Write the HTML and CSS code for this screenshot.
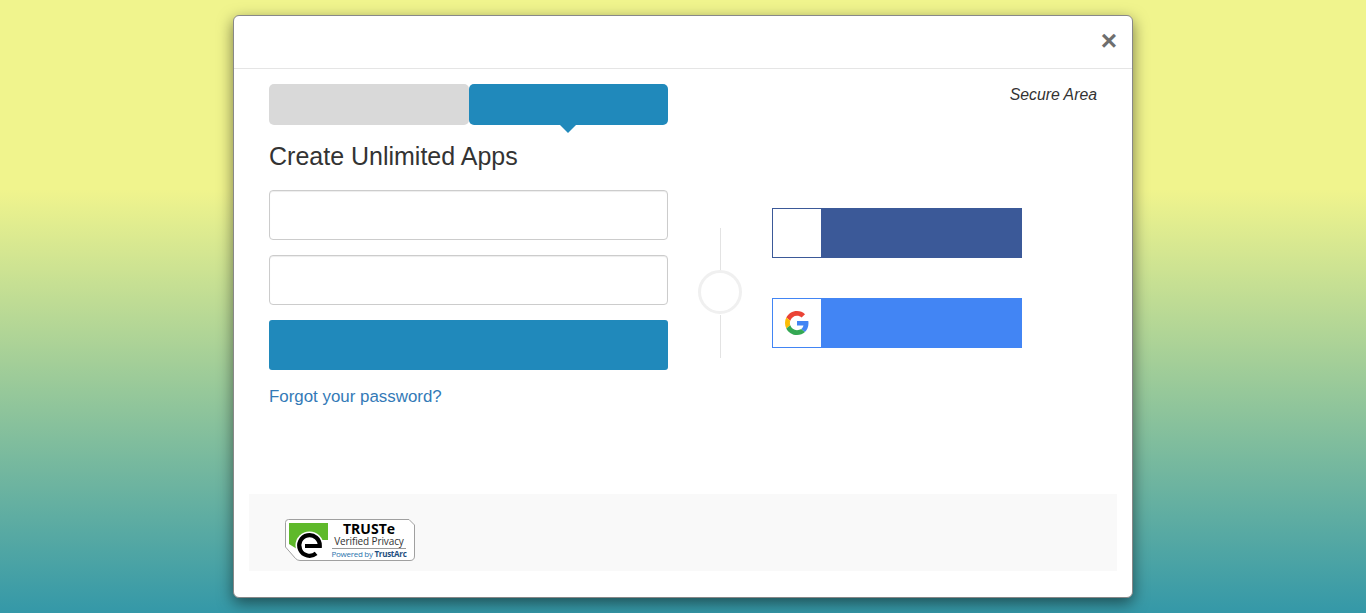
FILE: index.html
```html
<!DOCTYPE html>
<html lang="en">
<head>
<meta charset="utf-8">
<title>Create Unlimited Apps</title>
<link rel="stylesheet" href="styles.css">
</head>
<body>
<div class="modal">
  <header class="modal-header">
    <button class="close" type="button" aria-label="Close">×</button>
  </header>
  <div class="modal-body">
    <section class="col-form">
      <div class="tabs">
        <div class="tab tab-off"></div>
        <div class="tab tab-on"></div>
      </div>
      <h1 class="title">Create Unlimited Apps</h1>
      <input class="field" type="text" aria-label="Email">
      <input class="field" type="password" aria-label="Password">
      <button class="submit" type="button"></button>
      <a class="forgot" href="#">Forgot your password?</a>
    </section>
    <div class="col-divider">
      <span class="line"></span>
      <span class="ring"></span>
      <span class="line"></span>
    </div>
    <section class="col-social">
      <div class="social social-fb"><span class="social-icon"></span></div>
      <div class="social social-g">
        <span class="social-icon">
          <svg class="g-logo" viewBox="0 0 48 48" width="24" height="24">
            <path fill="#EA4335" d="M24 9.5c3.54 0 6.71 1.22 9.21 3.6l6.85-6.85C35.9 2.38 30.47 0 24 0 14.62 0 6.51 5.38 2.56 13.22l7.98 6.19C12.43 13.72 17.74 9.5 24 9.5z"/>
            <path fill="#4285F4" d="M46.98 24.55c0-1.57-.15-3.09-.38-4.55H24v9.02h12.94c-.58 2.96-2.26 5.48-4.78 7.18l7.73 6c4.51-4.18 7.09-10.36 7.09-17.65z"/>
            <path fill="#FBBC05" d="M10.53 28.59c-.48-1.45-.76-2.99-.76-4.59s.27-3.14.76-4.59l-7.98-6.19C.92 16.46 0 20.12 0 24c0 3.88.92 7.54 2.56 10.78l7.97-6.19z"/>
            <path fill="#34A853" d="M24 48c6.48 0 11.93-2.13 15.89-5.81l-7.73-6c-2.15 1.45-4.92 2.3-8.16 2.3-6.26 0-11.57-4.22-13.47-9.91l-7.98 6.19C6.51 42.62 14.62 48 24 48z"/>
          </svg>
        </span>
      </div>
    </section>
    <em class="secure">Secure Area</em>
  </div>
  <footer class="modal-footer">
    <div class="badge">
      <svg class="badge-mark" viewBox="0 0 130 42" width="130" height="42">
        <path fill="#fff" stroke="#a0a0a0" d="M3.500 .5H124L129.500 6V37Q129.500 41.500 125 41.500H15Q12.500 41.500 10.500 39.500L.5 28V3.500Q.5 .5 3.500 .5z"/>
        <path fill="#5fb92b" d="M4 4H43V21H30L12 30L4 25z"/>
        <circle cx="24.500" cy="26.500" r="14" fill="#fff"/>
        <path fill="none" stroke="#000" stroke-width="4.200" d="M31.100 34.400A10.300 10.300 0 1 1 34.800 27H20"/>
      </svg>
      <div class="badge-text">
        <strong class="badge-name">TRUSTe</strong>
        <span class="badge-sub">Verified Privacy</span>
        <span class="badge-by">Powered by <b class="badge-arc">TrustArc</b></span>
      </div>
    </div>
  </footer>
</div>
</body>
</html>
```
FILE: styles.css
```css
* { box-sizing: border-box; }
html, body { height: 100%; }
body {
  margin: 0;
  overflow: hidden;
  font-family: "Liberation Sans", Arial, sans-serif;
  color: #333;
  background: linear-gradient(180deg, #f0f48d 0, #f0f48d 190px, #3498a8 613px);
}
.modal {
  width: 900px;
  height: 583px;
  margin: 15px auto 0;
  background: #fff;
  border: 1px solid #888;
  border-radius: 6px;
  box-shadow: 0 5px 15px rgba(0, 0, 0, .5);
  display: flex;
  flex-direction: column;
}
.modal-header {
  height: 53px;
  flex: none;
  border-bottom: 1px solid #e5e5e5;
  display: flex;
  justify-content: flex-end;
  padding: 11px 14px 0 0;
}
.close {
  width: 18px;
  height: 28px;
  padding: 0;
  border: 0;
  background: none;
  color: #6e6e6e;
  font: bold 28px/28px "Liberation Sans", Arial, sans-serif;
}
.modal-body {
  position: relative;
  height: 425px;
  flex: none;
  padding: 15px 35px 0;
  display: flex;
}
.col-form { width: 399px; flex: none; display: flex; flex-direction: column; align-items: flex-start; }
.tabs { width: 100%; display: flex; height: 41px; flex: none; }
.tab { flex: 1; border-radius: 5px; position: relative; }
.tab-off { background: #d9d9d9; }
.tab-on { background: #2089bb; }
.tab-on::after {
  content: "";
  position: absolute;
  left: 50%;
  top: 100%;
  margin-left: -8px;
  border: 8px solid transparent;
  border-bottom-width: 0;
  border-top-color: #2089bb;
}
.title {
  margin: 18px 0 20px;
  font-size: 25px;
  line-height: 27px;
  font-weight: 400;
  color: #333;
}
.field {
  display: block;
  width: 100%;
  height: 50px;
  flex: none;
  margin: 0 0 15px;
  padding: 6px 12px;
  border: 1px solid #ccc;
  border-radius: 4px;
  background: #fff;
  box-shadow: inset 0 1px 1px rgba(0, 0, 0, .075);
}
.submit {
  display: block;
  width: 100%;
  height: 50px;
  flex: none;
  padding: 0;
  border: 0;
  border-radius: 3px;
  background: #2089bb;
}
.forgot {
  margin-top: 18px;
  font-size: 16.900px;
  line-height: 18px;
  color: #337ab7;
  text-decoration: none;
}
.col-divider {
  width: 104px;
  flex: none;
  height: 130px;
  margin-top: 144px;
  display: flex;
  flex-direction: column;
  align-items: center;
}
.line { flex: 1; width: 1px; background: #e3e3e3; }
.ring { width: 44px; height: 44px; flex: none; margin: -1px 0 1px; border: 3px solid #f0f0f0; border-radius: 50%; background: #fff; }
.col-social { padding-top: 124px; display: flex; flex-direction: column; gap: 40px; }
.social { width: 250px; height: 50px; display: flex; }
.social-icon {
  width: 50px;
  height: 50px;
  background: #fff;
  display: flex;
  align-items: center;
  justify-content: center;
}
.social-fb { background: #3b5998; }
.social-fb .social-icon { border: 1px solid #3b5998; }
.social-g { background: #4285f4; }
.social-g .social-icon { border: 1px solid #4285f4; }
.secure {
  position: absolute;
  top: 17px;
  right: 35px;
  font-size: 15.800px;
  line-height: 18px;
  color: #333;
}
.modal-footer {
  height: 77px;
  flex: none;
  margin: 0 15px;
  padding: 25px 0 0 36px;
  background: #f9f9f9;
}
.badge {
  position: relative;
  width: 130px;
  height: 42px;
}
.badge-mark { position: absolute; left: 0; top: 0; }
.badge-text {
  position: relative;
  margin-left: 47px;
  width: 74px;
  display: flex;
  flex-direction: column;
  align-items: center;
  color: #333;
}
.badge-name { font: bold 14px/14px "Open Sans", "Liberation Sans", sans-serif; color: #000; margin-top: 3px; }
.badge-sub { font: 10px/11px "Open Sans", "Liberation Sans", sans-serif; letter-spacing: -.12px; white-space: nowrap; }
.badge-by {
  font: 8px/10px "Open Sans", "Liberation Sans", sans-serif;
  letter-spacing: -.28px;
  color: #2a74ad;
  white-space: nowrap;
  border-top: 1px solid #999;
  margin-top: 1px;
}
.badge-arc { color: #1f4f80; }
```
